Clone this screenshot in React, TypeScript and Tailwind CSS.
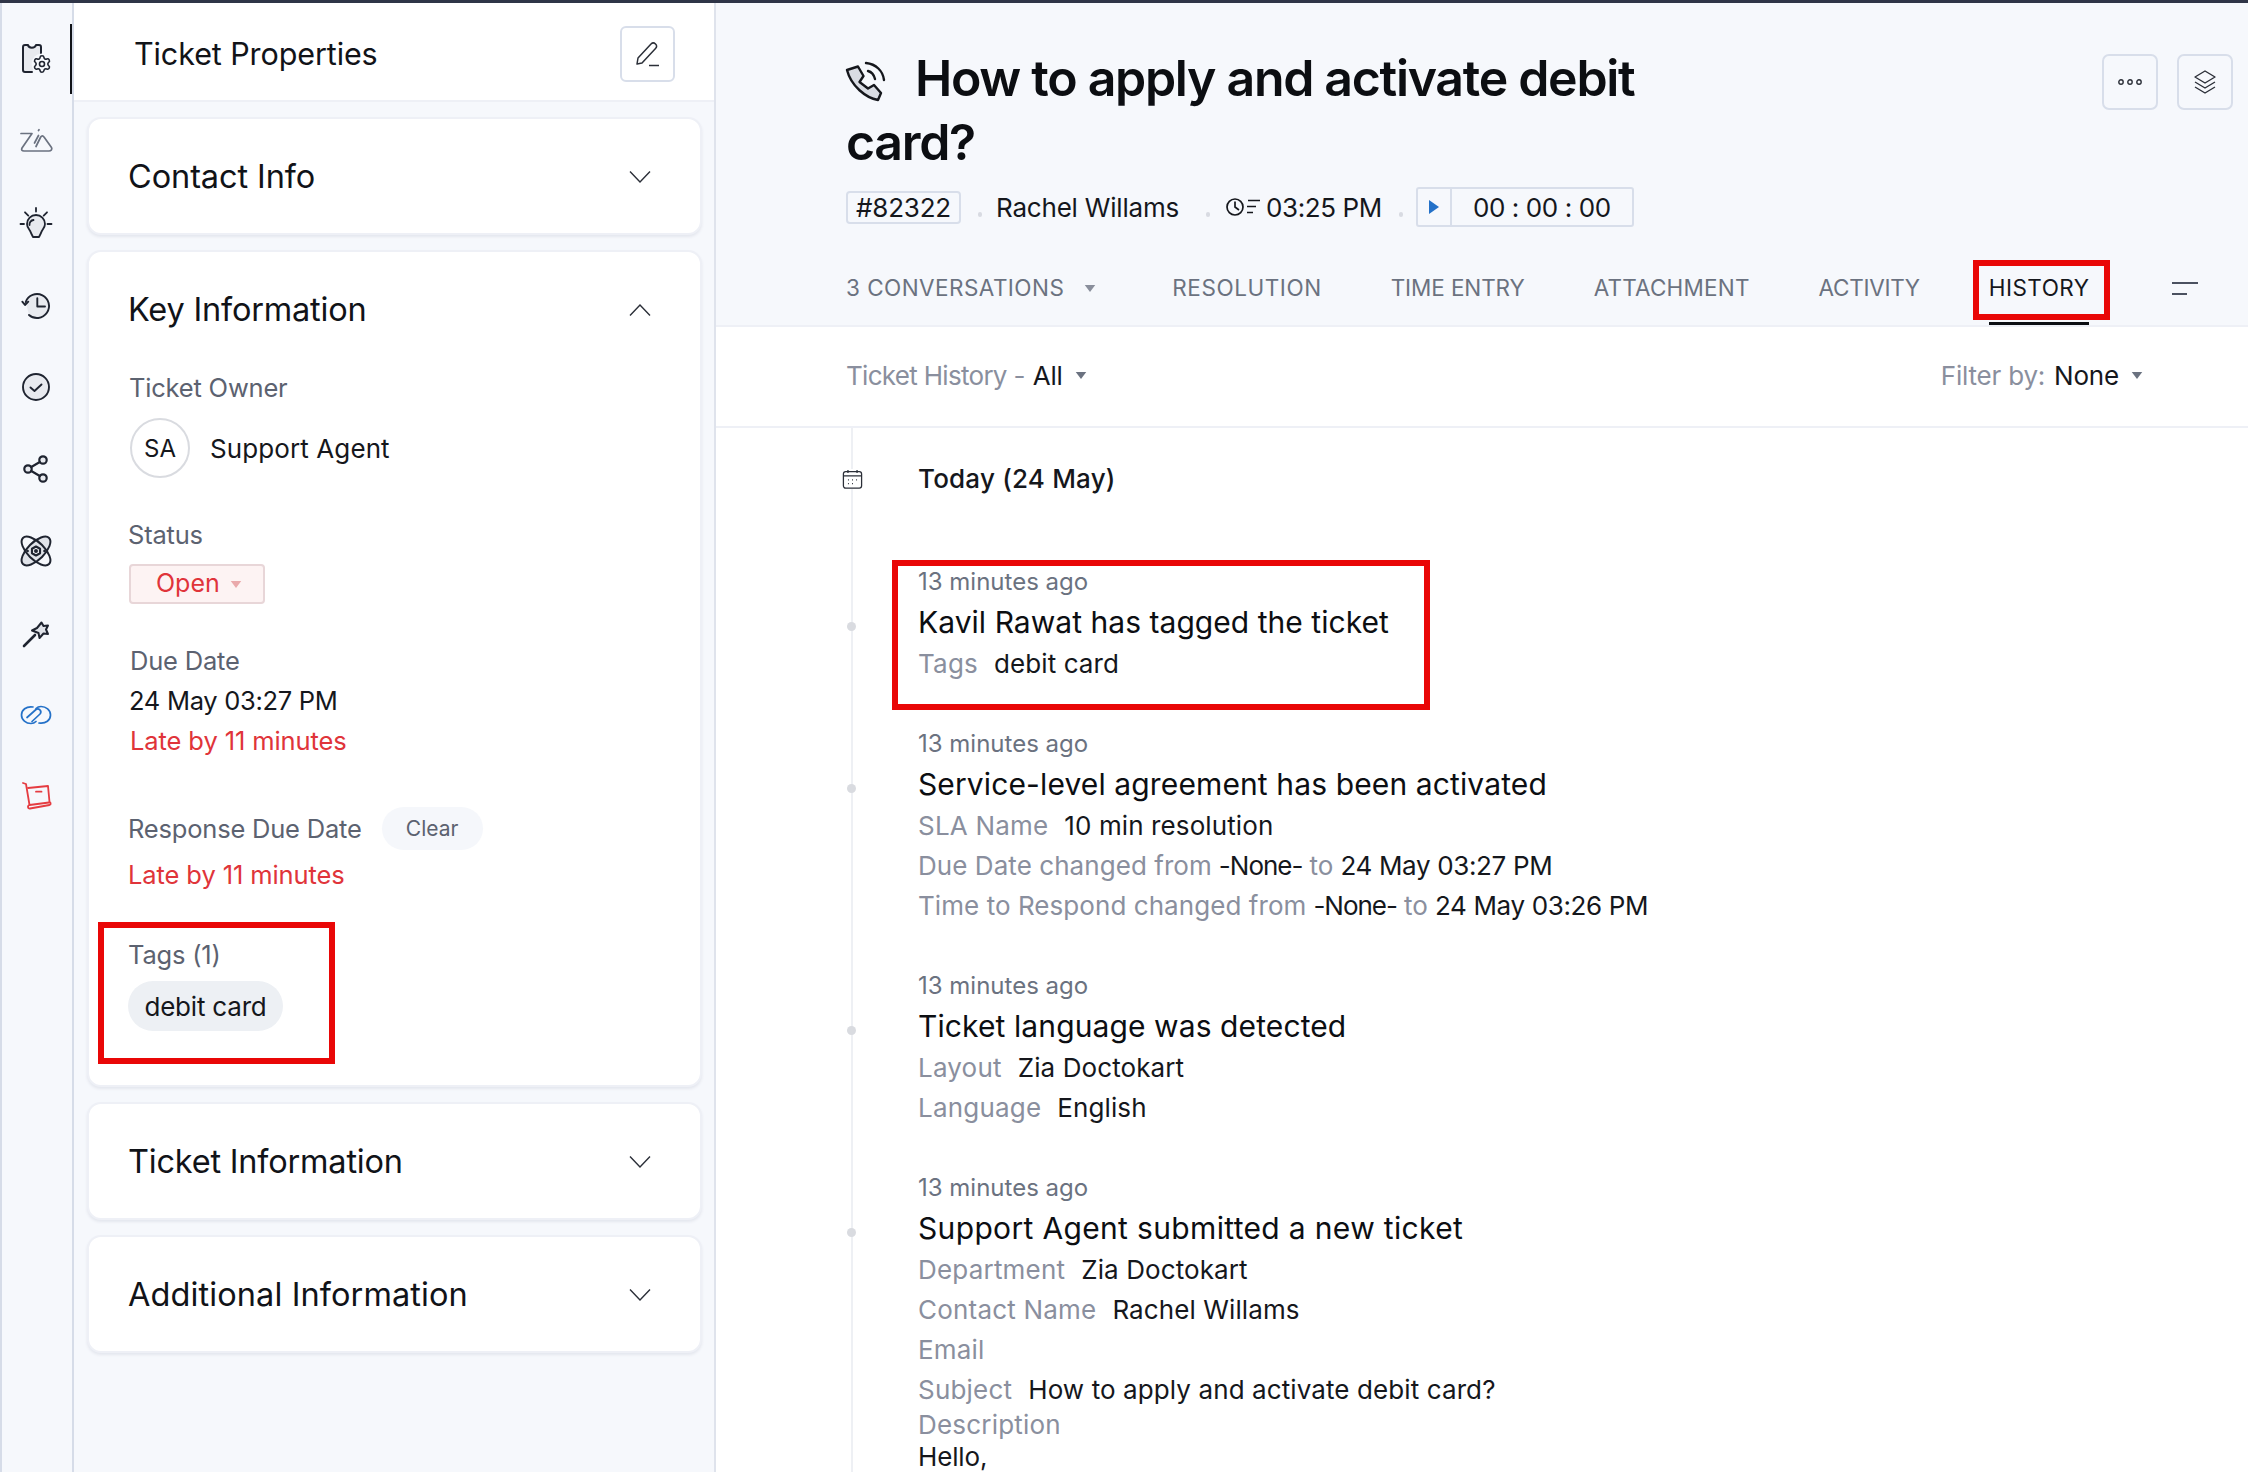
import type { ReactNode } from 'react';
import { Settings } from 'lucide-react';

// ─── Sidebar icons ───────────────────────────────────────────────────────────

function Ico({ children, color = '#1f2430', width = 1.8 }: { children: ReactNode; color?: string; width?: number }) {
  return (
    <svg viewBox="0 0 32 32" className="h-[32px] w-[32px] overflow-visible" fill="none" stroke={color} strokeWidth={width} strokeLinecap="round" strokeLinejoin="round">
      {children}
    </svg>
  );
}

const SIDEBAR_ICONS: ReactNode[] = [
  <Ico key="ticket" width={2}>
    <path d="M12 29H5a2 2 0 0 1-2-2V4a2 2 0 0 1 2-2h3c.5 3.500 7 3.500 8 0h3a2 2 0 0 1 2 2v7" fill="#e8eaef" />
    <circle cx="22" cy="21" r="10.500" fill="#f6f8fc" stroke="none" />
    <Settings x={12} y={11} size={20} strokeWidth={1.900} color="#1f2430" />
  </Ico>,
  <Ico key="zia" color="#6b7280" width={1.700}>
    <path d="M1 8.500H12L2 23c-1 2 0 3 2 3h25c2 0 3.500-1.800 2.500-3.500L24 12c-1-1.500-2.300-1.500-3.300 0L16 21.500" />
    <path d="M18.500 10.500L14.500 18M18.500 5.500l.5-.8" />
  </Ico>,
  <Ico key="bulb">
    <path d="M16 8a9 9 0 0 1 9 9c0 4-3 5.500-4 9l-2 4h-6l-2-4c-1-3.500-4-5-4-9a9 9 0 0 1 9-9z" fill="#e8eaef" />
    <path d="M9.500 18a4.500 4.500 0 0 1 4-5M16 1v3.500M5 5.300l3.300 3.300M27 5.300l-3.300 3.300M.5 17h3.500M27.500 17H31.500" />
  </Ico>,
  <Ico key="history" width={1.900}>
    <path d="M5.700 13A12 12 0 1 1 9 26" fill="#e8eaef" />
    <path d="M17.300 9.300V17.500H25M2.300 12.700L5 16l3.300-3.300" />
  </Ico>,
  <Ico key="check" width={1.900}>
    <circle cx="16" cy="16" r="13" fill="#e8eaef" />
    <path d="M10.500 16.500l4 3.500 7-6.500" />
  </Ico>,
  <Ico key="share" width={2.200}>
    <circle cx="23" cy="7" r="3.700" fill="#e8eaef" />
    <circle cx="8" cy="16" r="3.700" fill="#e8eaef" />
    <circle cx="23" cy="25" r="3.700" fill="#e8eaef" />
    <path d="M11.300 14l8.500-5M11.300 18l8.500 5" />
  </Ico>,
  <Ico key="atom" width={2}>
    <ellipse cx="16" cy="16" rx="8.500" ry="18.500" transform="rotate(45 16 16)" fill="#e0e3e9" />
    <ellipse cx="16" cy="16" rx="8.500" ry="18.500" transform="rotate(-45 16 16)" />
    <path d="M16 11.500l4 2.300v4.400l-4 2.300-4-2.300v-4.400z" strokeWidth="2.200" fill="#f6f8fc" />
    <circle cx="16" cy="16" r="1" />
    <path d="M7.500 16h.1M24.500 16h.1" strokeWidth="2.600" />
  </Ico>,
  <Ico key="wand" width={2}>
    <path d="M4 29l11-11" strokeWidth="2.600" />
    <path d="M21.500 5.500l2 3.500 4.500-.5-2 4 2 4.500-4.500-.5-4 4.500-1-5-6.500-2.500 5-2.500z" fill="#e0e3e9" />
  </Ico>,
  <Ico key="crm" color="#2471c8" width={1.700}>
    <path d="M13 8C6 7 1.500 11 1.500 16c0 5 4.500 8.500 9.500 8.500 2 0 3.500-.5 5-2" />
    <path d="M19 24c7 1 11.500-3 11.500-8 0-5-4.500-8.500-9.500-8.500-2 0-3.500.5-5 2" />
    <path d="M7 18.500l9-8c2.500-2 6.500 1.500 4 4.500l-8 7.500" />
  </Ico>,
  <Ico key="book" color="#e53c41" width={1.800}>
    <path d="M3 2l3 1 3.500 21" />
    <path d="M8 7l20-2 1.500 16" />
    <path d="M10 27.500l19.500-3.500c1.800-.5 1.300-3-.5-2.500L9.500 24c-2.500.7-1.500 4 .5 3.500z" />
    <path d="M16 10.700h5.500" />
  </Ico>,
];

// ─── Left panel bits ─────────────────────────────────────────────────────────

function Chevron({ up = false }: { up?: boolean }) {
  return (
    <svg viewBox="0 0 22 12" className="h-[12px] w-[22px]" fill="none" stroke="#2b2f38" strokeWidth="1.400">
      <path d={up ? 'M1 11.500L11 1l10 10.500' : 'M1 .500L11 11 21 .500'} />
    </svg>
  );
}

function Card({ children }: { children: ReactNode }) {
  return (
    <div className="rounded-[14px] border-2 border-[#eef0f6] bg-white shadow-[0_2px_3px_#e4e7ee]">{children}</div>
  );
}

function CardHead({ title, up = false, cls = 'tracking-[-0.2px]' }: { title: string; up?: boolean; cls?: string }) {
  return (
    <div className="flex h-[114px] items-center justify-between pl-[39px] pr-[49px] pt-[2px]">
      <h2 className={`text-[32.500px] leading-[40px] text-[#111318] ${cls}`}>{title}</h2>
      <Chevron up={up} />
    </div>
  );
}

const Label = ({ children, className = '' }: { children: ReactNode; className?: string }) => (
  <div className={`text-[25.500px] leading-[36px] tracking-[-0.2px] text-[#5c6270] ${className}`}>{children}</div>
);

const Late = ({ className = '' }: { className?: string }) => (
  <div className={`text-[25.500px] leading-[36px] tracking-[-0.1px] text-[#e0343a] ${className}`}>Late by 11 minutes</div>
);

const Caret = ({ color = '#8a8f9c' }: { color?: string }) => (
  <svg viewBox="0 0 12 8" className="h-[7px] w-[12px]" fill={color}>
    <path d="M0 0h12L6 8z" />
  </svg>
);

const MetaDot = ({ className }: { className: string }) => (
  <span className={`mt-[14px] h-[5px] w-[4px] rounded-full bg-[#d8dbe2] ${className}`} />
);

// ─── History feed data ───────────────────────────────────────────────────────

const MUTED = 'tracking-[0.2px] text-[#8a8f9e]';
const MUTED_LONG = 'tracking-[0.06px] text-[#8a8f9e]';
const VALUE = 'tracking-[0.1px] text-[#15171c]';
const VALUE_DATE = 'tracking-[-0.35px] text-[#15171c]';
const VALUE_NONE = 'tracking-[-1px] text-[#15171c]';

type Part = { cls: string; text: string };

const FEED: { title: string; titleClass: string; rows: Part[][]; marked?: boolean }[] = [
  {
    title: 'Kavil Rawat has tagged the ticket',
    titleClass: 'tracking-[0.04px]',
    marked: true,
    rows: [[{ cls: MUTED, text: 'Tags' }, { cls: VALUE, text: 'debit card' }]],
  },
  {
    title: 'Service-level agreement has been activated',
    titleClass: 'tracking-[0.12px]',
    rows: [
      [{ cls: MUTED, text: 'SLA Name' }, { cls: VALUE, text: '10 min resolution' }],
      [{ cls: MUTED_LONG, text: 'Due Date changed from' }, { cls: VALUE_NONE, text: '-None-' }, { cls: MUTED_LONG, text: 'to' }, { cls: VALUE_DATE, text: '24 May 03:27 PM' }],
      [{ cls: MUTED_LONG, text: 'Time to Respond changed from' }, { cls: VALUE_NONE, text: '-None-' }, { cls: MUTED_LONG, text: 'to' }, { cls: VALUE_DATE, text: '24 May 03:26 PM' }],
    ],
  },
  {
    title: 'Ticket language was detected',
    titleClass: 'tracking-[0.1px]',
    rows: [
      [{ cls: MUTED, text: 'Layout' }, { cls: VALUE, text: 'Zia Doctokart' }],
      [{ cls: MUTED, text: 'Language' }, { cls: VALUE, text: 'English' }],
    ],
  },
  {
    title: 'Support Agent submitted a new ticket',
    titleClass: 'tracking-[0.34px]',
    rows: [
      [{ cls: MUTED, text: 'Department' }, { cls: VALUE, text: 'Zia Doctokart' }],
      [{ cls: MUTED, text: 'Contact Name' }, { cls: VALUE, text: 'Rachel Willams' }],
      [{ cls: MUTED, text: 'Email' }],
      [{ cls: MUTED, text: 'Subject' }, { cls: VALUE, text: 'How to apply and activate debit card?' }],
    ],
  },
];

function FeedRow({ parts }: { parts: Part[] }) {
  return (
    <div className={`flex h-[40px] items-center text-[26px] ${parts.length > 2 ? 'gap-[7px]' : 'gap-[16px]'}`}>
      {parts.map((p, i) => (
        <span key={i} className={p.cls}>
          {p.text}
        </span>
      ))}
    </div>
  );
}

const TABS = [
  { label: 'RESOLUTION', cls: 'tracking-[0.55px]' },
  { label: 'TIME ENTRY', cls: 'tracking-[-0.1px]' },
  { label: 'ATTACHMENT', cls: 'tracking-[0.2px]' },
  { label: 'ACTIVITY', cls: 'tracking-[-0.3px]' },
];

export default function App() {
  return (
    <div className="flex h-[1472px] w-[2248px] flex-col overflow-hidden bg-white font-[Inter,sans-serif]">
      <div className="h-[3px] shrink-0 bg-[#2f3547]" />
      <div className="flex min-h-0 flex-1">
        {/* icon rail */}
        <div className="relative w-[74px] shrink-0 border-r-2 border-l-2 border-r-[#d6dce8] border-l-[#d6dce8] bg-[#f6f8fc] pt-[15px]">
          <div className="absolute right-0 top-[21px] h-[70px] w-[2px] bg-[#111318]" />
          {SIDEBAR_ICONS.map((icon, i) => (
            <div key={i} className="flex h-[82px] items-center justify-center pr-[2px]">
              {icon}
            </div>
          ))}
        </div>

        {/* properties panel */}
        <div className="flex w-[642px] shrink-0 flex-col border-r-2 border-[#dfe3ec] bg-[#f6f8fc]">
          <div className="flex h-[99px] shrink-0 items-center justify-between border-b-2 border-[#eef0f6] bg-white pl-[60px] pr-[39px] pt-[5px]">
            <h1 className="text-[30.500px] leading-[40px] tracking-[-0.1px] text-[#111318]">Ticket Properties</h1>
            <button className="flex h-[56px] w-[55px] items-center justify-center rounded-[6px] border-2 border-[#d8deea] bg-white">
              <svg viewBox="0 0 26 26" className="h-[26px] w-[26px]" fill="none" stroke="#2b2f38" strokeWidth="1.500" strokeLinejoin="round">
                <path d="M2 23l1-6L16 3c1.500-1.500 3-1.500 4.500 0S22 6 20.500 7.500L7 22z" />
                <path d="M14 24.500h10" />
              </svg>
            </button>
          </div>

          <div className="flex flex-col gap-[15px] pl-[13px] pr-[12px] pt-[15px]">
            <Card>
              <CardHead title="Contact Info" cls="tracking-[-0.1px]" />
            </Card>

            <Card>
              <CardHead title="Key Information" up />
              <div className="pb-[54px] pl-[39px]">
                <Label className="ml-[1px] mt-[4px]">Ticket Owner</Label>
                <div className="mt-[12px] flex items-center gap-[20px] pl-[2px]">
                  <div className="flex h-[60px] w-[60px] items-center justify-center rounded-full border-2 border-[#d9dbe0] pt-[1px] text-[24px] text-[#15171c]">SA</div>
                  <span className="text-[26px] tracking-[0.1px] text-[#15171c]">Support Agent</span>
                </div>
                <Label className="mt-[39px]">Status</Label>
                <div className="ml-[1px] mt-[11px] flex h-[40px] w-[136px] items-center gap-[10px] rounded-[4px] border-2 border-[#e8d6d8] bg-[#fdf3f3] pl-[25px] text-[25px] text-[#e0343a]">
                  Open
                  <Caret color="#eaa9ab" />
                </div>
                <Label className="ml-[2px] mt-[39px]">Due Date</Label>
                <div className="ml-[1px] mt-[4px] text-[25.500px] leading-[36px] tracking-[-0.3px] text-[#15171c]">24 May 03:27 PM</div>
                <Late className="ml-[2px] mt-[4px]" />
                <div className="mt-[48px] flex items-center gap-[20px]">
                  <Label>Response Due Date</Label>
                  <span className="flex h-[43px] w-[101px] items-center justify-center rounded-full bg-[#f5f7fb] text-[21px] text-[#5c6270]">Clear</span>
                </div>
                <Late className="mt-[7px]" />
                <div className="relative mt-[44px] w-fit">
                  <Label>Tags (1)</Label>
                  <div className="mt-[8px] flex h-[50px] w-[155px] items-center justify-center rounded-full bg-[#edf0f4] text-[26px] tracking-[-0.2px] text-[#15171c]">debit card</div>
                  <div className="pointer-events-none absolute left-[-30px] top-[-15px] h-[142px] w-[237px] border-[6px] border-[#e90707]" />
                </div>
              </div>
            </Card>

            <Card>
              <CardHead title="Ticket Information" />
            </Card>

            <Card>
              <CardHead title="Additional Information" cls="tracking-[0.1px]" />
            </Card>
          </div>
        </div>

        {/* ticket detail */}
        <div className="flex min-w-0 flex-1 flex-col">
          <div className="shrink-0 border-b-2 border-[#eef0f6] bg-[#f6f8fc] pl-[130px]">
            <div className="flex justify-between pr-[15px] pt-[43px]">
              <h1 className="w-[820px] text-[50px] font-semibold leading-[64px] tracking-[-1.300px] text-[#0c0e12]">
                <svg viewBox="8 10 42 42" className="ml-[-2px] mr-[29px] inline-block h-[42px] w-[42px] align-[-7px]" fill="none" stroke="#15171c" strokeWidth="2.400" strokeLinejoin="round" strokeLinecap="round">
                  <path d="M11 19l11-3.500L27.500 25l-4 6L32 37.500l6-3.500 7 8-3 7C30 47 15 35 11 19z" fill="#d9dce3" />
                  <path d="M30 12c10 1 17 8 18 17M32 20c4 1 6 4 7 8" />
                </svg>
                How to apply and activate debit card?
              </h1>
              <div className="mt-[8px] flex gap-[19px]">
                <button className="flex h-[56px] w-[56px] items-center justify-center rounded-[7px] border-2 border-[#d8deea]">
                  <svg viewBox="0 0 26 6" className="h-[6px] w-[26px]" fill="none" stroke="#2b2f38" strokeWidth="1.400">
                    <circle cx="4" cy="3" r="2.200" />
                    <circle cx="13" cy="3" r="2.200" />
                    <circle cx="22" cy="3" r="2.200" />
                  </svg>
                </button>
                <button className="flex h-[56px] w-[56px] items-center justify-center rounded-[7px] border-2 border-[#d8deea]">
                  <svg viewBox="0 0 24 24" className="h-[24px] w-[24px]" fill="none" stroke="#2b2f38" strokeWidth="1.400" strokeLinejoin="round">
                    <path d="M12 1l10 6-10 6L2 7z" />
                    <path d="M2 12l10 6 10-6M2 17l10 6 10-6" />
                  </svg>
                </button>
              </div>
            </div>

            <div className="mt-[13px] flex h-[40px] items-center text-[26px] tracking-[-0.2px] text-[#15171c]">
              <span className="flex h-[33px] w-[115px] items-center justify-center rounded-[4px] border-2 border-[#d8deea]">#82322</span>
              <MetaDot className="ml-[17px] mr-[14px]" />
              <span>Rachel Willams</span>
              <MetaDot className="ml-[27px] mr-[16px]" />
              <svg viewBox="0 0 34 20" className="mr-[6px] h-[20px] w-[34px]" fill="none" stroke="#15171c" strokeWidth="1.700">
                <circle cx="9" cy="10" r="8" />
                <path d="M9 4.500V10l4 3M22 3.500h12M21 9.500h9M21 15.500h6" />
              </svg>
              <span className="tracking-[-0.4px]">03:25 PM</span>
              <MetaDot className="ml-[17px] mr-[13px]" />
              <div className="flex h-[40px] w-[218px] items-center rounded-[3px] border-2 border-[#d8deea]">
                <span className="flex h-full w-[34px] items-center justify-center border-r-2 border-[#d8deea]">
                  <svg viewBox="0 0 10 14" className="h-[14px] w-[10px]" fill="#2471c8">
                    <path d="M0 0l10 7-10 7z" />
                  </svg>
                </span>
                <span className="flex-1 text-center tracking-[-0.4px]">00 : 00 : 00</span>
              </div>
            </div>

            <div className="mt-[33px] flex h-[65px] text-[22.500px] leading-[56px] tracking-[0.45px] text-[#6b7280]">
              <div className="mr-[76px] flex items-center gap-[20px] self-start">
                <span>3 CONVERSATIONS</span>
                <Caret />
              </div>
              <div className="flex gap-[69px]">
                {TABS.map((t) => (
                  <span key={t.label} className={t.cls}>{t.label}</span>
                ))}
                <span className="relative border-b-[3px] border-[#0c0e12] text-[#15171c]">
                  HISTORY
                  <span className="pointer-events-none absolute left-[-16px] top-0 h-[60px] w-[137px] border-[6px] border-[#e90707]" />
                </span>
              </div>
              <div className="ml-auto mr-[50px] flex h-[56px] flex-col justify-center gap-[9px]">
                <span className="h-[2px] w-[26px] bg-[#4b5160]" />
                <span className="h-[2px] w-[15px] bg-[#4b5160]" />
              </div>
            </div>
          </div>

          <div className="flex h-[101px] shrink-0 items-center justify-between border-b-2 border-[#eef0f6] pb-[2px] pl-[130px] pr-[105px] text-[26px] tracking-[-0.2px] text-[#8a8f9e]">
            <div className="flex items-center">
              <span className="tracking-[-0.7px]">Ticket History -</span>
              <span className="ml-[8px] text-[#15171c]">All</span>
              <span className="ml-[12px]"><Caret color="#6b7280" /></span>
            </div>
            <div className="flex items-center">
              <span>Filter by:</span>
              <span className="ml-[9px] text-[#15171c]">None</span>
              <span className="ml-[12px]"><Caret color="#6b7280" /></span>
            </div>
          </div>

          {/* timeline */}
          <div className="relative ml-[135px] min-h-0 flex-1 border-l-2 border-[#eef0f4] pl-[65px] pt-[33px]">
            <svg viewBox="0 0 22 22" className="absolute left-[-11px] top-[41px] h-[20px] w-[21px] bg-white" fill="none" stroke="#2b2f38" strokeWidth="1.400">
              <rect x="1" y="3" width="20" height="18" rx="2.500" />
              <path d="M1 7.500h20M6 1v3.500M16 1v3.500M6 12h1M10.500 12h1M15 12h1M6 16h1M10.500 16h1" />
            </svg>
            <div className="text-[26px] font-medium leading-[36px] tracking-[0.2px] text-[#15171c]">Today (24 May)</div>
            <div className="mt-[65px] flex flex-col gap-[41px]">
              {FEED.map((item) => (
                <div key={item.title} className="relative">
                  <div className="text-[24px] leading-[40px] tracking-[0px] text-[#6b7280]">13 minutes ago</div>
                  <div className={`relative mb-[1px] text-[30px] leading-[40px] text-[#0c0e12] ${item.titleClass}`}>
                    {item.title}
                    <span className="absolute left-[-71px] top-[20px] h-[9px] w-[9px] rounded-full bg-[#d9dbe0]" />
                  </div>
                  {item.rows.map((parts, i) => (
                    <FeedRow key={i} parts={parts} />
                  ))}
                  {item.marked && (
                    <div className="pointer-events-none absolute left-[-26px] top-[-2px] h-[150px] w-[538px] border-[6px] border-[#e90707]" />
                  )}
                </div>
              ))}
            </div>
            <div className="text-[26px] leading-[32px] tracking-[0.2px] text-[#8a8f9e]">Description</div>
            <div className="text-[26px] leading-[32px] tracking-[-0.15px] text-[#15171c]">Hello,</div>
          </div>
        </div>
      </div>
    </div>
  );
}
